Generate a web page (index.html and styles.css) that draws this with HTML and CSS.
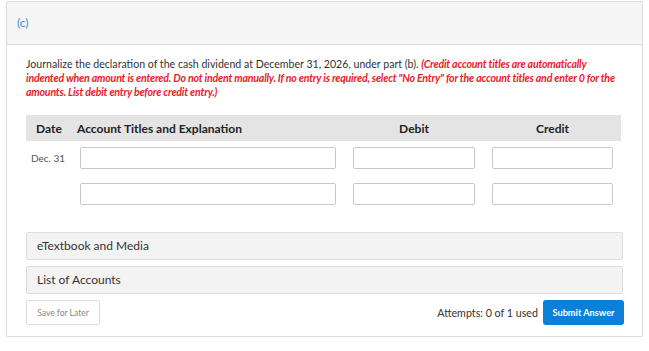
FILE: index.html
```html
<!DOCTYPE html>
<html>
<head>
  <title>Journal Entry Question</title>
  <link rel="stylesheet" href="styles.css">
</head>
<body>
  <div class="card">
    <div class="card-head">(c)</div>
    <div class="card-body">
      <p class="prompt">Journalize the declaration of the cash dividend at December 31, 2026, under part (b). <em class="note">(Credit account titles are automatically indented when amount is entered. Do not indent manually. If no entry is required, select "No Entry" for the account titles and enter 0 for the amounts. List debit entry before credit entry.)</em></p>

      <div class="journal">
        <div class="journal-head">
          <span class="col-date">Date</span>
          <span class="col-title">Account Titles and Explanation</span>
          <span class="col-amt">Debit</span>
          <span class="col-amt">Credit</span>
        </div>
        <div class="journal-row">
          <span class="row-date">Dec. 31</span>
          <input type="text" class="field">
          <input type="text" class="field">
          <input type="text" class="field">
        </div>
        <div class="journal-row">
          <span class="row-date"></span>
          <input type="text" class="field">
          <input type="text" class="field">
          <input type="text" class="field">
        </div>
      </div>

      <div class="panel panel-first">eTextbook and Media</div>
      <div class="panel">List of Accounts</div>

      <div class="actions">
        <button class="btn-save">Save for Later</button>
        <div class="submit-area">
          <span class="attempts">Attempts: 0 of 1 used</span>
          <button class="btn-submit">Submit Answer</button>
        </div>
      </div>
    </div>
  </div>
</body>
</html>
```

FILE: styles.css
```css
body {
  font-family: Lato, 'Open Sans', sans-serif;
  background-color: #fff;
  margin: 0;
  padding: 1px 6px 0 6px;
  color: #333;
}

.card {
  width: 635px;
  border: 1px solid #dcdcdc;
  border-radius: 2px;
  box-shadow: 0 1px 2px rgba(0, 0, 0, 0.06);
  background-color: #fff;
}

.card-head {
  height: 42px;
  line-height: 42px;
  padding-left: 10px;
  background-color: #f5f5f5;
  border-bottom: 1px solid #dcdcdc;
  color: #3d8fd8;
  font-size: 12px;
}

.card-body {
  padding: 12px 20px 11px 19px;
}

.prompt {
  margin: 0 -2px 0 0;
  font-size: 10.6px;
  line-height: 14px;
  color: #333;
}

.note {
  color: #e8212b;
  font-weight: bold;
  letter-spacing: -0.2px;
}

.journal {
  margin-top: 16px;
  width: 595px;
}

.journal-head,
.journal-row {
  display: grid;
  grid-template-columns: 37px 256px 122px 121px;
  column-gap: 17px;
  padding-right: 8px;
  align-items: center;
}

.journal-head {
  height: 26px;
  background-color: #e4e4e4;
  font-size: 12px;
  font-weight: bold;
  color: #222;
}

.col-date {
  padding-left: 10px;
}

.col-title {
  margin-left: -3px;
  white-space: nowrap;
}

.col-amt {
  text-align: center;
}

.journal-row {
  margin-top: 6px;
}

.journal-row + .journal-row {
  margin-top: 14px;
}

.row-date {
  padding-left: 5px;
  font-size: 10px;
  color: #555;
  white-space: nowrap;
}

.field {
  height: 22px;
  box-sizing: border-box;
  border: 1px solid #c8c8c8;
  border-radius: 2px;
  margin: 0;
  padding: 0 4px;
}

.panel {
  width: 597px;
  height: 28px;
  box-sizing: border-box;
  margin-top: 6px;
  padding-left: 10px;
  line-height: 26px;
  background-color: #f3f3f3;
  border: 1px solid #dedede;
  border-radius: 2px;
  font-size: 12px;
  color: #333;
}

.panel-first {
  margin-top: 27px;
}

.actions {
  width: 598px;
  margin-top: 6px;
  display: flex;
  justify-content: space-between;
  align-items: center;
}

.btn-save {
  width: 74px;
  height: 25px;
  background-color: #fff;
  border: 1px solid #dedede;
  border-radius: 2px;
  font-family: Lato, sans-serif;
  font-size: 8.5px;
  color: #888;
  padding: 0;
}

.submit-area {
  display: flex;
  align-items: center;
  gap: 5px;
}

.attempts {
  font-size: 10.7px;
  color: #333;
}

.btn-submit {
  width: 81px;
  height: 25px;
  background-color: #0b80d8;
  border: none;
  border-radius: 3px;
  color: #fff;
  font-family: Lato, sans-serif;
  font-size: 9.2px;
  font-weight: bold;
  padding: 0;
}
```
